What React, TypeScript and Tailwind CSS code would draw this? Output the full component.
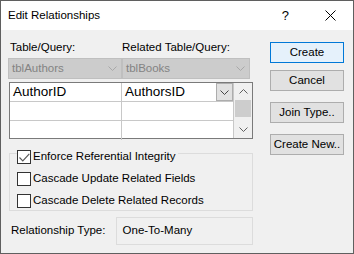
import React from 'react'

const font = { fontFamily: '"Liberation Sans", Arial, sans-serif' }

const Chevron = ({ className, up }: { className?: string; up?: boolean }) => (
  <svg width="9" height="5" viewBox="0 0 9 5" className={className}>
    <polyline
      points={up ? '0.5,4.5 4.5,0.5 8.5,4.5' : '0.5,0.5 4.5,4.5 8.5,0.5'}
      fill="none"
      stroke="currentColor"
      strokeWidth="1"
    />
  </svg>
)

const Combo = ({ text, width }: { text: string; width: string }) => (
  <div className={`${width} h-[21px] flex items-center justify-between border border-[#bfbfbf] bg-[#cccccc] pl-[3px] pr-[4px] text-[11.5px] text-[#838383]`}>
    <span>{text}</span>
    <Chevron className="text-[#a8a8a8]" />
  </div>
)

const Check = ({ label, checked }: { label: string; checked?: boolean }) => (
  <div className="flex items-center h-[14px] gap-[2px] w-fit bg-[#f0f0f0] pr-[2px]">
    <div className="w-[14px] h-[14px] border border-[#333333] bg-white flex items-center justify-center">
      {checked ? (
        <svg width="11" height="9" viewBox="0 0 11 9">
          <polyline points="0.5,4.5 3.8,7.8 10.3,0.8" fill="none" stroke="#5a5a5a" strokeWidth="1.2" />
        </svg>
      ) : null}
    </div>
    <span className="text-[11.5px] text-black">{label}</span>
  </div>
)

const Btn = ({ title, primary, className }: { title: string; primary?: boolean; className?: string }) => (
  <div
    className={`h-[21px] w-[74px] flex items-center justify-center text-[11.5px] text-black border ${
      primary ? 'border-[#0078d7] bg-[#e5f1fb]' : 'border-[#adadad] bg-[#e1e1e1]'
    } ${className || ''}`}
  >
    {title}
  </div>
)

const GridRow = ({ a, b, dropdown, last }: { a?: string; b?: string; dropdown?: boolean; last?: boolean }) => (
  <div className={`flex h-[19px] ${last ? 'h-[18px]' : 'border-b border-[#c8c8c8]'}`}>
    <div className="w-[112px] border-r border-[#c8c8c8] pl-[3px] text-[13.5px] leading-[18px]">{a}</div>
    <div className="flex-1 flex justify-between pl-[3px] text-[13.5px] leading-[18px]">
      <span>{b}</span>
      {dropdown ? (
        <div className="w-[17px] h-[18px] border border-[#adadad] bg-[#e1e1e1] flex items-center justify-center text-[#444]">
          <Chevron />
        </div>
      ) : null}
    </div>
  </div>
)

export default function App() {
  return (
    <div style={font} className="w-[354px] h-[254px] flex flex-col border border-[#5f5f5f] bg-[#f0f0f0] text-black">
      <div className="h-[29px] bg-white flex items-center shrink-0">
        <span className="pl-[7px] text-[11.5px]">Edit Relationships</span>
        <span className="ml-auto text-[13px] mr-[36px]">?</span>
        <svg width="11" height="11" viewBox="0 0 11 11" className="mr-[17px]">
          <path d="M0.5 0.5 L10.5 10.5 M10.5 0.5 L0.5 10.5" stroke="#000" strokeWidth="1" />
        </svg>
      </div>

      <div className="flex flex-1">
        <div className="ml-[7px] w-[245px] pt-[9px] flex flex-col">
          <div className="grid grid-cols-[114px_128px] text-[11.5px] leading-[16px]">
            <span className="pl-[2px]">Table/Query:</span>
            <span>Related Table/Query:</span>
          </div>
          <div className="flex mt-[3px]">
            <Combo text="tblAuthors" width="w-[114px]" />
            <Combo text="tblBooks" width="w-[128px]" />
          </div>

          <div className="mt-[3px] ml-[1px] w-[244px] h-[57px] border border-[#7a7a7a] bg-white flex">
            <div className="w-[224px] border-r border-[#c8c8c8]">
              <GridRow a="AuthorID" b="AuthorsID" dropdown />
              <GridRow />
              <GridRow last />
            </div>
            <div className="flex-1 flex flex-col bg-[#f0f0f0]">
              <div className="h-[17px] flex items-center justify-center text-[#606060]">
                <Chevron up />
              </div>
              <div className="h-[17px] mx-[1px] bg-[#cdcdcd]" />
              <div className="flex-1" />
              <div className="h-[17px] flex items-center justify-center text-[#606060]">
                <Chevron />
              </div>
            </div>
          </div>

          <div className="mt-[14px] ml-[1px] w-[244px] border border-[#dcdcdc] pb-[2px] flex flex-col gap-[9px]">
            <div className="-mt-[4px] ml-[7px]">
              <Check label="Enforce Referential Integrity" checked />
            </div>
            <div className="ml-[7px] -mt-[1px]">
              <Check label="Cascade Update Related Fields" />
            </div>
            <div className="ml-[7px] -mt-[1px]">
              <Check label="Cascade Delete Related Records" />
            </div>
          </div>

          <div className="mt-[6px] flex items-center">
            <span className="pl-[3px] w-[108px] text-[11.5px]">Relationship Type:</span>
            <div className="w-[138px] h-[28px] border border-[#dcdcdc] flex items-center pl-[6px] text-[11.5px]">
              One-To-Many
            </div>
          </div>
        </div>

        <div className="ml-auto mr-[9px] pt-[12px] flex flex-col">
          <Btn title="Create" primary />
          <Btn title="Cancel" className="mt-[7px]" />
          <Btn title="Join Type.." className="mt-[11px]" />
          <Btn title="Create New.." className="mt-[11px]" />
        </div>
      </div>
    </div>
  )
}
